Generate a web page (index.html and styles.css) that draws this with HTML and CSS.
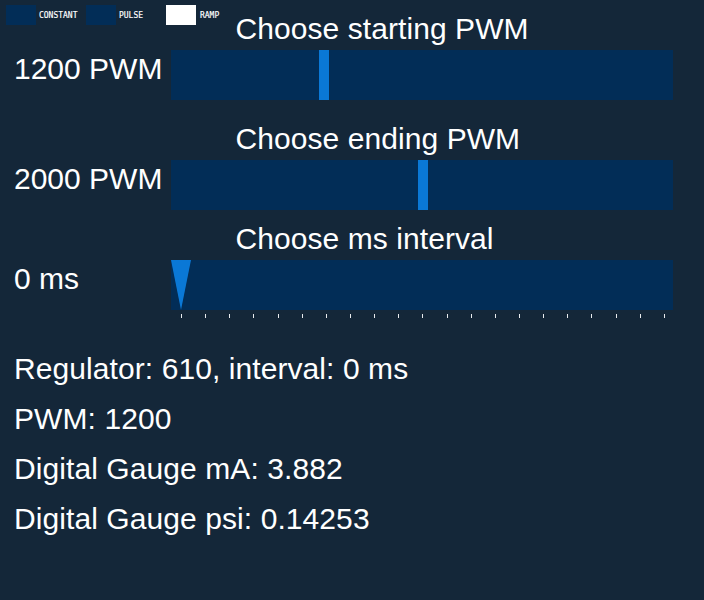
FILE: index.html
```html
<!DOCTYPE html>
<html lang="en">
<head>
<meta charset="utf-8">
<title>PWM control</title>
<link rel="stylesheet" href="styles.css">
</head>
<body>
<main class="panel">
  <section class="control control-start">
    <div class="modes">
      <div class="mode"><span class="swatch"></span><span class="mode-label">CONSTANT</span></div>
      <div class="mode"><span class="swatch"></span><span class="mode-label">PULSE</span></div>
      <div class="mode"><span class="swatch swatch-on"></span><span class="mode-label mode-label-on">RAMP</span></div>
    </div>
    <h2 class="title">Choose starting PWM</h2>
    <div class="value">1200 PWM</div>
    <div class="track"><div class="handle handle-start"></div></div>
  </section>
  <section class="control control-end">
    <h2 class="title">Choose ending PWM</h2>
    <div class="value">2000 PWM</div>
    <div class="track"><div class="handle handle-end"></div></div>
  </section>
  <section class="control control-interval">
    <h2 class="title">Choose ms interval</h2>
    <div class="value">0 ms</div>
    <div class="track"><svg class="pointer" width="20" height="50" viewBox="0 0 20 50"><path d="M0 0H20L10 50Z" fill="#0a78d6"/></svg></div>
    <div class="ticks">
      <i></i><i></i><i></i><i></i><i></i><i></i><i></i><i></i><i></i><i></i><i></i>
      <i></i><i></i><i></i><i></i><i></i><i></i><i></i><i></i><i></i><i></i>
    </div>
  </section>
  <section class="readout">
    <p>Regulator: 610, interval: 0 ms</p>
    <p>PWM: 1200</p>
    <p>Digital Gauge mA: 3.882</p>
    <p>Digital Gauge psi: 0.14253</p>
  </section>
</main>
</body>
</html>
```
FILE: styles.css
```css
* { box-sizing: border-box; }
body {
  margin: 0;
  background: #142739;
  color: #fff;
  font-family: "Liberation Sans", Arial, sans-serif;
  font-size: 30px;
  line-height: 34px;
}
.panel { height: 600px; overflow: hidden; }
.control {
  display: grid;
  grid-template-columns: 157px 502px;
  grid-template-rows: 38px 50px;
  padding: 12px 0 0 14px;
}
.control-start { height: 110px; }
.control-end { height: 110px; padding-top: 12px; }
.control-interval { height: 132px; padding-top: 2px; grid-template-rows: 38px 50px 12px; }
.modes {
  grid-area: 1 / 1;
  display: flex;
  width: 240px;
  height: 20px;
  margin: -7px 0 0 -8px;
}
.mode { display: flex; align-items: center; width: 80px; }
.swatch { width: 30px; height: 20px; background: #022d57; flex: none; }
.swatch-on { background: #fff; }
.mode-label {
  margin-left: 3px;
  font: 9.5px/10px "DejaVu Sans Mono", monospace;
  -webkit-text-stroke: .2px #fff;
  transform: scaleX(.84);
  transform-origin: left;
}
.mode-label-on { margin-left: 4px; }
.title {
  grid-area: 1 / 2;
  margin: 0 0 0 64.5px;
  font-size: 30px;
  font-weight: normal;
  letter-spacing: .07px;
}
.value { grid-area: 2 / 1; padding-top: 2px; white-space: nowrap; }
.track { grid-area: 2 / 2; height: 50px; background: #022d57; }
.handle { width: 10px; height: 50px; background: #0a78d6; }
.handle-start { margin-left: 148px; }
.handle-end { margin-left: 246.5px; }
.pointer { display: block; }
.ticks {
  grid-area: 3 / 2;
  display: flex;
  justify-content: space-between;
  width: 484px;
  margin-left: 10px;
  padding-top: 4px;
}
.ticks i { width: 1px; height: 4px; background: #e8ebee; }
.readout p { margin: 0; height: 50px; letter-spacing: .08px; }
.readout { padding-left: 14px; }
```
